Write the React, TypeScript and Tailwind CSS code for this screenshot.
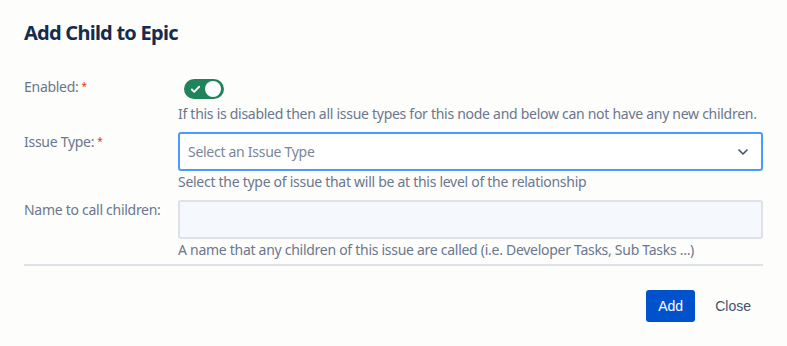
import { ChevronDown, Check } from 'lucide-react';

// 子課題の追加ダイアログ
export default function App() {
  return (
    <div className="w-[787px] h-[346px] bg-[#fdfdfc] text-[#6b778c] font-['Noto_Sans',sans-serif] text-[14px] tracking-[-0.28px]">
      <div className="px-6 pt-[21px]">
        <h1 className="text-[20px] font-bold text-[#172b4d] leading-[24px] tracking-[-0.75px]">Add Child to Epic</h1>

        <div className="mt-[28px] flex flex-col">
          {/* Enabled */}
          <div className="flex">
            <div className="w-[154px] pt-[4px] leading-[20px]">
              Enabled:<span className="text-[#de350b] ml-[3px] text-[10px] align-top relative top-[-1px]">*</span>
            </div>
            <div className="flex-1">
              <div className="pt-[6px] pl-[6px]">
                <div className="w-[40px] h-[20px] rounded-full bg-[#1f845a] flex items-center justify-between px-[3px]">
                  <Check className="w-[11px] h-[11px] text-white ml-[3px]" strokeWidth={4} />
                  <div className="w-[16px] h-[16px] rounded-full bg-white" />
                </div>
              </div>
              <p className="mt-[5px] leading-[20px]">If this is disabled then all issue types for this node and below can not have any new children.</p>
            </div>
          </div>

          {/* Issue Type */}
          <div className="flex mt-[8px]">
            <div className="w-[154px] leading-[20px]">
              Issue Type:<span className="text-[#de350b] ml-[3px] text-[10px] align-top relative top-[-1px]">*</span>
            </div>
            <div className="flex-1">
              <div className="h-[39px] border-2 border-[#4c9aff] rounded-[3px] bg-white flex items-center justify-between pl-[8px] pr-[10px]">
                <span className="text-[#7a869a]">Select an Issue Type</span>
                <ChevronDown className="w-[16px] h-[16px] text-[#42526e]" strokeWidth={2.5} />
              </div>
              <p className="mt-[1px] leading-[20px]">Select the type of issue that will be at this level of the relationship</p>
            </div>
          </div>

          {/* Name */}
          <div className="flex mt-[8px]">
            <div className="w-[154px] leading-[20px]">Name to call children:</div>
            <div className="flex-1">
              <input className="w-full h-[39px] border-2 border-[#dfe1e6] rounded-[3px] bg-[#f5f9fe] outline-none px-[8px]" />
              <p className="mt-[1px] leading-[20px]">A name that any children of this issue are called (i.e. Developer Tasks, Sub Tasks ...)</p>
            </div>
          </div>
        </div>

        <div className="mt-[4px] h-[2px] bg-[#dfe1e6]" />

        <div className="flex justify-end items-center gap-[8px] mt-[24px] font-['Liberation_Sans',sans-serif] tracking-normal">
          <button className="h-[32px] w-[49px] rounded-[3px] bg-[#0052cc] text-white text-[14px]">Add</button>
          <button className="h-[32px] px-[12px] text-[#42526e] text-[14px]">Close</button>
        </div>
      </div>
    </div>
  );
}
